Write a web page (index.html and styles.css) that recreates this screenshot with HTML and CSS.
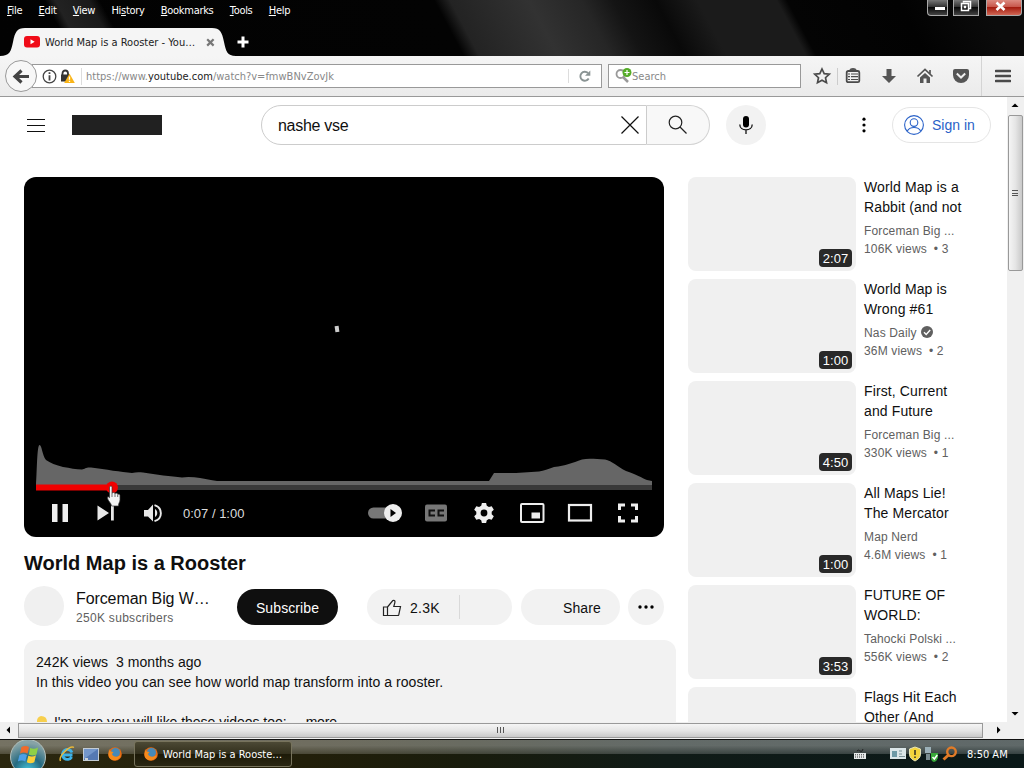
FILE: index.html
```html
<!DOCTYPE html>
<html lang="en">
<head>
<meta charset="UTF-8">
<title>World Map is a Rooster - YouTube</title>
<link rel="stylesheet" href="styles.css">
</head>
<body>
<div class="titlebar">
  <div class="menubar">
    <span><u>F</u>ile</span><span><u>E</u>dit</span><span><u>V</u>iew</span><span>Hi<u>s</u>tory</span><span><u>B</u>ookmarks</span><span><u>T</u>ools</span><span><u>H</u>elp</span>
    <div class="winbuttons">
      <div class="winbtn min"><svg width="22" height="16"><path d="M8 7h10v3H8z" fill="#fff"/></svg></div>
      <div class="winbtn max"><svg width="26" height="16" fill="none" stroke="#fff" stroke-width="1.5"><path d="M10.500 2.500V1.500h7v7h-1.500M8.500 3.500h7v7h-7z"/><path d="M11.500 6.500h1v1h-1z"/></svg></div>
      <div class="winbtn close"><svg width="36" height="16"><path d="M10.500 2.500l8 7.500M18.500 2.500l-8 7.500" stroke="#fff" stroke-width="2.600"/></svg></div>
    </div>
  </div>
  <div class="tabs">
    <svg class="tabshape" width="236" height="28"><path d="M0 28C10 28 11 23 13 14C15 4 17 0 25 0H212C220 0 222 4 224 14C226 23 227 28 236 28z" fill="#f5f5f5"/></svg>
    <svg width="16" height="12"><rect width="16" height="11.500" rx="3" fill="#f00c18"/><path d="M6.500 3.200v5l4.200-2.500z" fill="#fff"/></svg>
    <span class="tabtitle">World Map is a Rooster - You…</span>
    <svg class="tabclose" width="9" height="9"><path d="M1.200 1.200l6.400 6.400M7.600 1.200l-6.400 6.400" stroke="#777" stroke-width="2.200"/></svg>
    <svg class="tabnew" width="12" height="12"><path d="M6 .5v11M.5 6h11" stroke="#fff" stroke-width="3"/></svg>
  </div>
</div>

<div class="navbar">
  <div class="back"><svg width="31" height="31"><path d="M15.500 9.500l-6.500 6 6.500 6M9.500 15.500H23" fill="none" stroke="#444" stroke-width="3.200"/></svg></div>
  <div class="urlbar">
    <svg width="15" height="15"><circle cx="7.500" cy="7.500" r="6.300" fill="none" stroke="#444" stroke-width="1.300"/><path d="M6.600 3.200h1.800v1.800H6.600zM6.600 6.300h1.800v5.200H6.600z" fill="#444"/></svg>
    <svg class="lock" width="15" height="15"><path d="M2.500 6V4.500C2.500 .5 8 .5 8 4.500V6" fill="none" stroke="#333" stroke-width="1.800"/><rect x="1" y="5.500" width="8.500" height="7" fill="#333"/><path d="M9.500 4.500L14.800 14H4.200z" fill="#f9b417"/><path d="M9.500 7.500v3.300M9.500 11.700v1.300" stroke="#fff" stroke-width="1.300"/></svg>
    <span class="url">https://www.<b>youtube.com</b>/watch?v=fmwBNvZovJk</span>
    <span class="reload"><svg width="14" height="14"><path d="M10.700 9.600A4.500 4.500 0 1 1 10 4" fill="none" stroke="#8a9494" stroke-width="1.900"/><path d="M12.300 1.500v5.200H7z" fill="#8a9494"/></svg></span>
  </div>
  <div class="searchbar">
    <svg width="17" height="17"><circle cx="5.500" cy="6" r="4" fill="none" stroke="#999" stroke-width="1.800"/><path d="M8 9l5 5" stroke="#999" stroke-width="2.500"/><circle cx="12" cy="4.500" r="4.500" fill="#55ac28"/><path d="M12 2v5M9.500 4.500h5" stroke="#fff" stroke-width="1.200"/></svg>
    <span>Search</span>
  </div>
  <div class="tools">
    <svg width="24" height="24"><path d="M12 5l2.200 4.600 5.100.6-3.800 3.500 1 5-4.500-2.500-4.500 2.500 1-5-3.800-3.500 5.100-.6z" fill="none" stroke="#4a4a4a" stroke-width="1.700"/></svg>
    <span class="split"></span>
    <svg width="24" height="24"><path d="M9 7c0-3 6-3 6 0" fill="#555" stroke="#555" stroke-width="1.500"/><rect x="5.700" y="7" width="12.600" height="11.200" rx="1.500" fill="none" stroke="#4a4a4a" stroke-width="1.800"/><path d="M7 10h2M10 10h7M7 12.700h2M10 12.700h7M7 15.500h2M10 15.500h7" stroke="#4a4a4a" stroke-width="1.200"/></svg>
    <svg width="24" height="24"><path d="M9.500 5h5v7h4.500l-7 7-7-7h4.500z" fill="#555"/></svg>
    <svg width="24" height="24"><path d="M4.500 12.500L12 5.500l7.500 7M17 6v4" fill="none" stroke="#555" stroke-width="1.700"/><path d="M7 13.500l5-4.600 5 4.600V19h-3.500v-4.500h-3V19H7z" fill="#555"/></svg>
    <svg width="24" height="24"><path d="M4 7q0-2 2-2h12q2 0 2 2v4a8 8 0 0 1-16 0z" fill="#555"/><path d="M7.800 9.500l4.200 4 4.200-4" fill="none" stroke="#f0f0f0" stroke-width="2"/></svg>
  </div>
  <svg class="burger" width="16" height="14"><path d="M1 2h14M1 7h14M1 12h14" stroke="#4a4a4a" stroke-width="2.600" stroke-linecap="round"/></svg>
</div>

<div class="viewport">
  <div class="page">
    <div class="masthead">
      <svg class="guide" width="18" height="13"><path d="M0 .5h18M0 6.500h18M0 12.500h18" stroke="#0f0f0f"/></svg>
      <div class="logo"></div>
      <div class="searchbox"><span>nashe vse</span><svg width="18" height="18"><path d="M.5.500l17 17M17.500.500l-17 17" stroke="#0f0f0f" stroke-width="1.200"/></svg></div>
      <div class="searchbtn"><svg width="20" height="20" fill="none" stroke="#222" stroke-width="1.200"><circle cx="7.500" cy="7.500" r="6.300"/><path d="M12 12l6.500 6.500"/></svg></div>
      <div class="mic"><svg width="14" height="18"><rect x="4" width="6" height="11.500" rx="3"/><path d="M.8 8.500c0 7.200 12.400 7.200 12.400 0M7 14v4" fill="none" stroke="#111" stroke-width="1.300"/></svg></div>
      <svg class="dots" width="4" height="16"><circle cx="2" cy="2.200" r="1.600"/><circle cx="2" cy="8" r="1.600"/><circle cx="2" cy="13.800" r="1.600"/></svg>
      <div class="signin"><svg width="20" height="20" fill="none" stroke="#2a62c8" stroke-width="1.100"><circle cx="10" cy="10" r="9.400"/><circle cx="10" cy="7.600" r="3.800"/><path d="M3.200 16.200c2.500-5 11.100-5 13.600 0"/></svg><span>Sign in</span></div>
    </div>

    <div class="columns">
      <div class="primary">
        <div class="player">
          <div class="speck"></div>
          <svg class="heat" width="616" height="50"><path d="M0 44C1 30 1 4 3.500 4C6 4 6 14 10 19C14 22 20 24 27 26C34 27 40 28.500 46 28.500C49 28 50 26 55 26.500C70 28.500 85 31 96 32C100 31 103 31 107 31.500C120 33.500 135 35.500 146 36.500C151 35.500 158 36 164 37C170 38 174 39 181 40H453L458 32H480L503 30.500C508 30 512 28 518 26C530 24.500 536 22 546 18.500C552 17 560 18 569 18.500C576 20 582 26 590 30C600 33 606 37 611 39L616 40V44z" fill="#666"/><path d="M0 44h616v5H0z" fill="#393939"/><path d="M0 43.500h76v6H0z" fill="#f00000"/><circle cx="76" cy="46.500" r="6" fill="#f00000"/></svg>
          <div class="controls">
            <svg width="48" height="36" fill="#eee"><path d="M16 9h5.500v18H16zM26.500 9H32v18h-5.500z"/></svg>
            <svg width="46" height="36" fill="#e8e8e8"><path d="M13.500 10.500v15L25 18zM27 10.500h2.800v15H27z"/></svg>
            <svg width="46" height="36" fill="#e8e8e8"><path d="M14 15v6.500h4l5 5V9.500l-5 5.500z"/><path d="M25 14c3 1.500 3 6.500 0 8z"/><path d="M24.500 10.200c8.500 2.500 8.500 13.500 0 16" fill="none" stroke="#e8e8e8" stroke-width="1.900"/></svg>
            <span class="time">0:07 / 1:00</span>
            <svg class="autoplay" width="52" height="36"><rect x="8" y="12.500" width="24" height="11" rx="5.500" fill="#777"/><circle cx="33" cy="18" r="9" fill="#eee"/><path d="M30.500 14v8l5.500-4z"/></svg>
            <svg width="48" height="36"><rect x="13" y="9.500" width="22" height="17" rx="2" fill="#777"/><path d="M22 16.500v-1h-4.500v5H22v-1M31 16.500v-1h-4.500v5H31v-1" fill="none" stroke="#111" stroke-width="2"/></svg>
            <svg width="48" height="36"><path d="M21.900 8h4.200l.7 2.800 2.100 1.200 2.800-.8 2.100 3.600-2.100 2v2.400l2.100 2-2.100 3.600-2.800-.8-2.100 1.200-.7 2.800h-4.200l-.7-2.800-2.100-1.200-2.800.8-2.100-3.600 2.100-2v-2.400l-2.100-2 2.100-3.600 2.800.8 2.100-1.200z" fill="#eee"/><circle cx="24" cy="18" r="3.400"/></svg>
            <svg width="48" height="36"><rect x="13" y="9" width="22.500" height="18" rx="1" fill="none" stroke="#eee" stroke-width="2"/><path d="M23.500 17.500h8.500v6h-8.500z" fill="#eee"/></svg>
            <svg width="48" height="36"><rect x="13" y="10" width="22" height="15.500" fill="none" stroke="#eee" stroke-width="2.200"/></svg>
            <svg width="48" height="36"><path d="M15.500 15v-5H21M27 10h5.500v5M32.500 21v5H27M21 26h-5.500v-5" fill="none" stroke="#eee" stroke-width="3"/></svg>
          </div>
          <svg class="hand" width="14" height="22"><path d="M2.500 2C3.500.3 5 .8 5 2.500V8q2-1.300 3 .4 2-1 2.700.8 2-.6 2.300 1.300v4c0 3-1.500 3-1.500 6.500H4.500c0-3-3.800-5-4-8-.2-1.500 1-1.500 2-.3z" fill="#f4f4f4" stroke="#333" stroke-width=".7"/><path d="M5 8v4M8 8.500V12M10.700 9.500V12" stroke="#333" stroke-width=".7"/></svg>
        </div>
        <h1>World Map is a Rooster</h1>
        <div class="owner">
          <div class="avatar"></div>
          <div class="channel"><div class="name">Forceman Big W…</div><div class="subs">250K subscribers</div></div>
          <div class="subscribe">Subscribe</div>
          <div class="like"><svg width="20" height="20"><path d="M1.500 9h4v8.500h-4zM5.500 9l5.300-6.500c2.200-.6 2.400.9 2 2.400L11.800 8.500h6.700l-1.700 8.200q-.3.800-1.300.8h-10" fill="none" stroke="#222" stroke-width="1.200"/></svg><span>2.3K</span></div>
          <div class="share">Share</div>
          <div class="more"><svg width="16" height="4"><circle cx="2" cy="2" r="1.700"/><circle cx="8" cy="2" r="1.700"/><circle cx="14" cy="2" r="1.700"/></svg></div>
        </div>
        <div class="description">
          <div class="info">242K views&nbsp; 3 months ago</div>
          <div class="line">In this video you can see how world map transform into a rooster.</div>
          <div class="line last"><svg width="12" height="16"><path d="M1 7q0-4 4-5 6 0 6 6v6H1z" fill="#f7cf4d"/></svg><span>I'm sure you will like these videos too:</span><span class="readmore">...more</span></div>
        </div>
      </div>

      <div class="related">
        <div class="video"><div class="thumb"><span>2:07</span></div><div class="details"><div class="title">World Map is a<br>Rabbit (and not</div><div class="meta">Forceman Big ...</div><div class="meta">106K views &nbsp;• 3</div></div></div>
        <div class="video"><div class="thumb"><span>1:00</span></div><div class="details"><div class="title">World Map is<br>Wrong #61</div><div class="meta">Nas Daily <svg width="12" height="12"><circle cx="6" cy="6" r="6" fill="#606060"/><path d="M3 6.200l2.200 2.200L9.200 4" fill="none" stroke="#fff" stroke-width="1.400"/></svg></div><div class="meta">36M views &nbsp;• 2</div></div></div>
        <div class="video"><div class="thumb"><span>4:50</span></div><div class="details"><div class="title">First, Current<br>and Future</div><div class="meta">Forceman Big ...</div><div class="meta">330K views &nbsp;• 1</div></div></div>
        <div class="video"><div class="thumb"><span>1:00</span></div><div class="details"><div class="title">All Maps Lie!<br>The Mercator</div><div class="meta">Map Nerd</div><div class="meta">4.6M views &nbsp;• 1</div></div></div>
        <div class="video"><div class="thumb"><span>3:53</span></div><div class="details"><div class="title">FUTURE OF<br>WORLD:</div><div class="meta">Tahocki Polski ...</div><div class="meta">556K views &nbsp;• 2</div></div></div>
        <div class="video"><div class="thumb"></div><div class="details"><div class="title">Flags Hit Each<br>Other (And</div></div></div>
      </div>
    </div>
  </div>
  <div class="vscroll">
    <svg width="17" height="18"><path d="M4.500 10h7L8 6.500z"/></svg>
    <div class="vthumb"><svg width="8" height="8"><path d="M0 1.500h6M0 4.500h6M0 6.500h6" stroke="#555"/></svg></div>
    <svg class="down" width="17" height="18"><path d="M4.500 8h7L8 11.500z"/></svg>
  </div>
</div>

<div class="hscroll">
  <svg width="18" height="16"><path d="M10 4.500v7L6.500 8z"/></svg>
  <div class="hthumb"><svg width="9" height="7"><path d="M1.500 0v6M4.500 0v6M7.500 0v6" stroke="#555"/></svg></div>
  <svg width="30" height="16"><path d="M14 4.500v7L17.500 8z"/></svg>
</div>

<div class="taskbar">
  <svg class="start" width="36" height="29"><defs><radialGradient id="orb" cx=".5" cy=".9" r=".8"><stop offset="0" stop-color="#48c8e0"/><stop offset=".5" stop-color="#256a80"/><stop offset="1" stop-color="#87a3a6"/></radialGradient></defs><circle cx="18" cy="17" r="17.500" fill="url(#orb)" stroke="#b4c0bc"/><path d="M11.500 7q4-2 7.500 0l-1.500 6.500q-4-2-7.500 0z" fill="#f06a2a"/><path d="M20.200 8q4 1.800 7.800-.5l-1.500 7q-4 2-7.700 0z" fill="#8fd046"/><path d="M9.500 15q4-2 7.500 0l-1.700 6.500q-3.500-2-7.500 0z" fill="#4d9fe6"/><path d="M18.300 15.700q4 1.800 7.700-.5l-1.700 7q-4 2-7.500 0z" fill="#fccf38"/></svg>
  <svg class="ie" width="16" height="16"><path d="M13.500 9H4.500M13 6.500A5 5 0 1 0 12.700 11" fill="none" stroke="#3db2e8" stroke-width="2.800"/><path d="M1.500 15C-1 10 11-1 15 1.500" fill="none" stroke="#e9b93a" stroke-width="1.400"/></svg>
  <svg class="desk" width="16" height="13"><rect x=".5" y=".5" width="15" height="12" fill="#5579b3" stroke="#c4ccd4"/><path d="M1 1h14L1 11z" fill="#7497cb"/><path d="M2 10h3v2H2z" fill="#ccd2d6"/></svg>
  <svg class="fox" width="14" height="14"><circle cx="7" cy="7" r="6.800" fill="#e66a12"/><circle cx="7.500" cy="5.500" r="4.500" fill="#4689b8"/><path d="M1 2c0 2 2 3 4.500 3L4 7c1 3 5 4 8.500 1 0 6-11 8-12 0z" fill="#f58a1c"/></svg>
  <div class="task"><svg width="14" height="14"><circle cx="7" cy="7" r="6.800" fill="#e66a12"/><circle cx="7.500" cy="5.500" r="4.500" fill="#4689b8"/><path d="M1 2c0 2 2 3 4.500 3L4 7c1 3 5 4 8.500 1 0 6-11 8-12 0z" fill="#f58a1c"/></svg><span>World Map is a Rooste…</span></div>
  <svg class="keyb" width="12" height="12"><path d="M3 3q1-2 3 0t3-2" fill="none" stroke="#222"/><path d="M0 5h12v6H0z" fill="#e6eaea"/><path d="M1 6.800h10M1 9h10" stroke="#333" stroke-dasharray="1 1"/></svg>
  <div class="tray">
    <svg width="16" height="16"><path d="M0 2h16v11H0z" fill="#dbe6e8"/><path d="M2 5h5v6H2z" fill="#6e9aa6"/><path d="M9 5h3M9 8h3M9 10.500h6" stroke="#7b9298"/></svg>
    <svg width="12" height="16"><path d="M6 1l5.500 2v5c0 4-3 5.500-5.500 7C3.500 13.500.5 12 .5 8V3z" fill="#f4d43c" stroke="#e7e4b8"/><path d="M6 4v5M6 10.500v1.500" stroke="#222" stroke-width="1.400"/></svg>
    <svg width="15" height="16"><path d="M1 1h6v6H1z" fill="#9bb0b8"/><path d="M2 8h4v6H2z" fill="#7a8c90"/><path d="M7 7h7v5q-1 3-4 4-3-1-3-4z" fill="#36a838"/><path d="M8.500 11l1.800 2 3-4" fill="none" stroke="#fff" stroke-width="1.500"/></svg>
    <svg width="16" height="16"><circle cx="9.500" cy="5.800" r="4.300" fill="none" stroke="#e07b28" stroke-width="2.400"/><path d="M6.500 9L1.500 13.500" stroke="#e07b28" stroke-width="3"/></svg>
  </div>
  <span class="clock">8:50 AM</span>
</div>
</body>
</html>
```

FILE: styles.css
```css
* {
  box-sizing: border-box;
}
html, body {
  margin: 0;
  width: 1024px;
  height: 768px;
  overflow: hidden;
}
body {
  display: flex;
  flex-direction: column;
  font-family: "Liberation Sans", Arial, sans-serif;
  color: #0f0f0f;
  background: #fff;
}
svg {
  display: block;
  flex: none;
}

/* window frame */
.titlebar, .navbar, .taskbar {
  font-family: "DejaVu Sans Condensed", "DejaVu Sans", sans-serif;
  font-stretch: condensed;
  font-size: 11px;
}
.titlebar {
  height: 56px;
  background: linear-gradient(62deg, transparent 20%, #222 23%, #1a1a1a 32%, transparent 35%) 0 0 / 340px 56px no-repeat,
    linear-gradient(62deg, #020202 0, #030303 44%, #232323 45.500%, #323232 53%, #262626 58%, #141414 61%, #090909 65%, #1b1b1b 69%, #1b1b1b 76.500%, #040404 77.500%, #020202 88%, #0b0b0b 96%);
}
.menubar {
  display: flex;
  height: 28px;
  padding-left: 7px;
  color: #fff;
  line-height: 21px;
  letter-spacing: -.3px;
}
.menubar span {
  margin-right: 16.3px;
}
.winbuttons {
  display: flex;
  margin-left: auto;
  margin-right: 2px;
}
.winbtn {
  height: 16px;
  border: 1px solid #aaa;
  border-top: 0;
  background: linear-gradient(#777, #333 45%, #080808 50%, #444);
}
.winbtn svg {
  margin-left: -1px;
}
.min {
  width: 21px;
  margin-right: 5px;
  border-radius: 0 0 0 4px;
}
.max {
  width: 26px;
  margin-right: 7px;
}
.close {
  width: 36px;
  border-radius: 0 0 4px 0;
  background: linear-gradient(#dc8a80, #c8584c 45%, #a51d10 50%, #d06654);
}
.tabs {
  position: relative;
  display: flex;
  align-items: center;
  height: 28px;
  padding-left: 24px;
}
.tabs > * {
  position: relative;
}
.tabs .tabshape {
  position: absolute;
  left: 0;
  top: 0;
}
.tabtitle {
  width: 150px;
  margin-left: 5px;
  white-space: nowrap;
  color: #222;
}
.tabclose { margin-left: 11px; }
.tabnew { margin-left: 22px; }

.navbar {
  display: flex;
  align-items: center;
  height: 41px;
  padding-left: 5px;
  background: linear-gradient(#f5f5f5, #ebebeb);
  border-bottom: 1px solid #999;
}
.back {
  z-index: 1;
  width: 32px;
  height: 32px;
  border: 1px solid #999;
  border-radius: 50%;
  background: #f7f7f7;
}
.urlbar, .searchbar {
  display: flex;
  align-items: center;
  height: 24px;
  background: #fff;
  border: 1px solid #999;
  color: #888;
}
.urlbar {
  width: 570px;
  margin-left: -5px;
  padding-left: 9px;
}
.lock {
  margin-left: 3px;
}
.url {
  flex: 1;
  margin-left: 6px;
  padding: 1px 0 0 4px;
  border-left: 1px solid #ddd;
  line-height: 16px;
}
.url b {
  color: #222;
  font-weight: normal;
}
.reload {
  width: 33px;
  padding-left: 9px;
  border-left: 1px solid #ddd;
}
.searchbar {
  width: 193px;
  margin-left: 6px;
  padding-left: 6px;
}
.searchbar span {
  padding-top: 1px;
}
.tools {
  display: flex;
  align-items: center;
  gap: 12px;
  width: 172px;
  height: 40px;
  margin-left: 9px;
  border-right: 1px solid #d4d4d4;
}
.split {
  width: 1px;
  height: 17px;
  margin: 0 -9px;
  background: #ccc;
}
.burger {
  margin-left: 13px;
}

/* page */
.viewport {
  display: flex;
  height: 625px;
}
.page {
  width: 1007px;
  overflow: hidden;
}
.masthead {
  display: flex;
  align-items: center;
  height: 56px;
  padding-left: 27px;
}
.logo {
  width: 90px;
  height: 20px;
  margin: 0 99px 0 27px;
  background: #212121;
}
.searchbox {
  display: flex;
  align-items: center;
  justify-content: space-between;
  width: 386px;
  height: 40px;
  padding: 0 7px 0 16px;
  border: 1px solid #ccc;
  border-radius: 20px 0 0 20px;
  font-size: 16px;
  letter-spacing: -.3px;
}
.searchbox span {
  padding-top: 1px;
}
.searchbtn {
  display: flex;
  align-items: center;
  width: 63px;
  height: 40px;
  padding-left: 21px;
  border: 1px solid #d3d3d3;
  border-left: 0;
  border-radius: 0 20px 20px 0;
  background: #f8f8f8;
}
.mic {
  display: flex;
  align-items: center;
  justify-content: center;
  width: 40px;
  height: 40px;
  margin-left: 16px;
  border-radius: 50%;
  background: #f2f2f2;
}
.dots {
  margin: 0 26px 0 96px;
}
.signin {
  display: flex;
  align-items: center;
  width: 99px;
  height: 36px;
  padding-left: 11px;
  border: 1px solid #e5e5e5;
  border-radius: 18px;
  font-size: 14px;
}
.signin span {
  margin-left: 8px;
  color: #2a62c8;
}
.columns {
  display: flex;
  padding: 24px 0 0 24px;
}
.primary {
  width: 664px;
}
.player {
  position: relative;
  display: flex;
  flex-direction: column;
  justify-content: flex-end;
  width: 640px;
  height: 360px;
  padding: 0 12px;
  border-radius: 12px;
  background: #000;
}
.speck {
  position: absolute;
  left: 311px;
  top: 149px;
  width: 4px;
  height: 6px;
  background: #ccc;
  transform: rotate(-8deg);
}
.heat {
  overflow: visible;
}
.controls {
  display: flex;
  align-items: center;
  height: 46px;
  padding-bottom: 2px;
}
.time {
  width: 62px;
  margin-left: 7px;
  color: #ddd;
  font-size: 13px;
  white-space: nowrap;
}
.autoplay {
  margin-left: 115px;
}
/* pointer over the seek handle */
.hand {
  position: absolute;
  left: 83px;
  top: 308px;
}
h1 {
  margin: 12px 0 0;
  font-size: 20px;
  line-height: 28px;
}
.owner {
  display: flex;
  align-items: center;
  height: 40px;
  margin-top: 9px;
}
.avatar {
  width: 40px;
  height: 40px;
  border-radius: 50%;
  background: #f0f0f0;
}
.channel {
  width: 174px;
  padding: 2px 0 0 12px;
}
.name {
  font-size: 16px;
  line-height: 22px;
  letter-spacing: -.1px;
}
.subs {
  color: #606060;
  font-size: 12px;
  line-height: 17px;
  letter-spacing: .3px;
}
.subscribe, .like, .share, .more {
  display: flex;
  align-items: center;
  height: 36px;
  margin-top: 2px;
  padding-top: 1px;
  border-radius: 18px;
  background: #f2f2f2;
  font-size: 14px;
}
.subscribe {
  width: 101px;
  margin-left: -1px;
  justify-content: center;
  background: #0f0f0f;
  color: #fff;
  letter-spacing: .1px;
}
.like {
  width: 145px;
  margin: 2px 9px 0 29px;
  padding-left: 15px;
  background: linear-gradient(#d9d9d9, #d9d9d9) 92px center / 1px 24px no-repeat #f2f2f2;
}
.like span {
  margin-left: 8px;
  letter-spacing: .3px;
}
.share {
  width: 99px;
  padding-left: 42px;
  letter-spacing: .1px;
}
.more {
  width: 36px;
  margin-left: 8px;
  padding-bottom: 2px;
  justify-content: center;
}
.description {
  width: 652px;
  height: 140px;
  margin-top: 14px;
  padding: 12px;
  border-radius: 12px;
  background: #f2f2f2;
  font-size: 14px;
  line-height: 20px;
  letter-spacing: .05px;
}
.last {
  display: flex;
  align-items: center;
  margin-top: 20px;
  letter-spacing: -.03px;
}
.last span {
  margin-left: 6px;
}
.last .readmore {
  margin-left: 8px;
  letter-spacing: -.2px;
}

/* related videos */
.video {
  display: flex;
  height: 94px;
  margin-bottom: 8px;
}
.thumb {
  display: flex;
  align-items: flex-end;
  justify-content: flex-end;
  width: 168px;
  padding: 0 4px 4px 0;
  border-radius: 8px;
  background: #f0f0f0;
}
.thumb span {
  width: 33px;
  height: 18px;
  border-radius: 4px;
  background: #292929;
  color: #fff;
  font-size: 13px;
  line-height: 19px;
  text-align: center;
}
.details {
  margin-left: 8px;
  white-space: nowrap;
}
.title {
  margin-bottom: 5px;
  font-size: 14px;
  line-height: 20px;
  letter-spacing: .12px;
}
.meta {
  color: #606060;
  font-size: 12px;
  line-height: 18px;
  letter-spacing: .15px;
}
.meta svg {
  display: inline-block;
  margin-left: 1px;
  vertical-align: -1px;
}

/* scrollbars */
.vscroll {
  display: flex;
  flex-direction: column;
  width: 17px;
  background: #f0f0f0;
}
.vthumb {
  display: flex;
  align-items: center;
  justify-content: center;
  width: 15px;
  height: 156px;
  margin-left: 1px;
  border: 1px solid #999;
  border-radius: 2px;
  background: linear-gradient(to right, #f5f5f5, #e5e5e5 50%, #c9c9c9);
}
.down {
  margin-top: auto;
}
.hscroll {
  display: flex;
  height: 17px;
  background: #f0f0f0;
}
.hthumb {
  display: flex;
  align-items: center;
  justify-content: center;
  width: 965px;
  height: 15px;
  margin-top: 1px;
  border: 1px solid #999;
  background: linear-gradient(#f5f5f5, #e5e5e5 50%, #c9c9c9);
}

/* taskbar */
.taskbar {
  display: flex;
  align-items: center;
  height: 29px;
  padding-left: 10px;
  border-top: 1px solid #111;
  background: linear-gradient(rgba(255,255,255,.35), rgba(255,255,255,.35) 20%, rgba(255,255,255,.18) 50%, transparent 51%), linear-gradient(to right, #2b270f, #221f0a 30%, #191c0c 45%, #101b17 65%, #0a1818);
  color: #fff;
}
.ie { margin-left: 13px; }
.desk { margin-left: 8px; }
.fox { margin-left: 9px; }
.task {
  display: flex;
  align-items: center;
  width: 158px;
  height: 26px;
  margin-left: 12px;
  padding-left: 9px;
  border: 1px solid #77735c;
  border-radius: 3px;
  background: linear-gradient(#4c4935, #322f1c 50%, #1d1a08 52%, #2a2713);
}
.task span {
  margin-left: 5px;
  white-space: nowrap;
}
.keyb {
  margin: 0 2px 0 auto;
}
.tray {
  display: flex;
  gap: 3px;
  margin-left: 22px;
}
.clock {
  width: 41px;
  margin: 0 16px 0 9px;
  white-space: nowrap;
}
```
